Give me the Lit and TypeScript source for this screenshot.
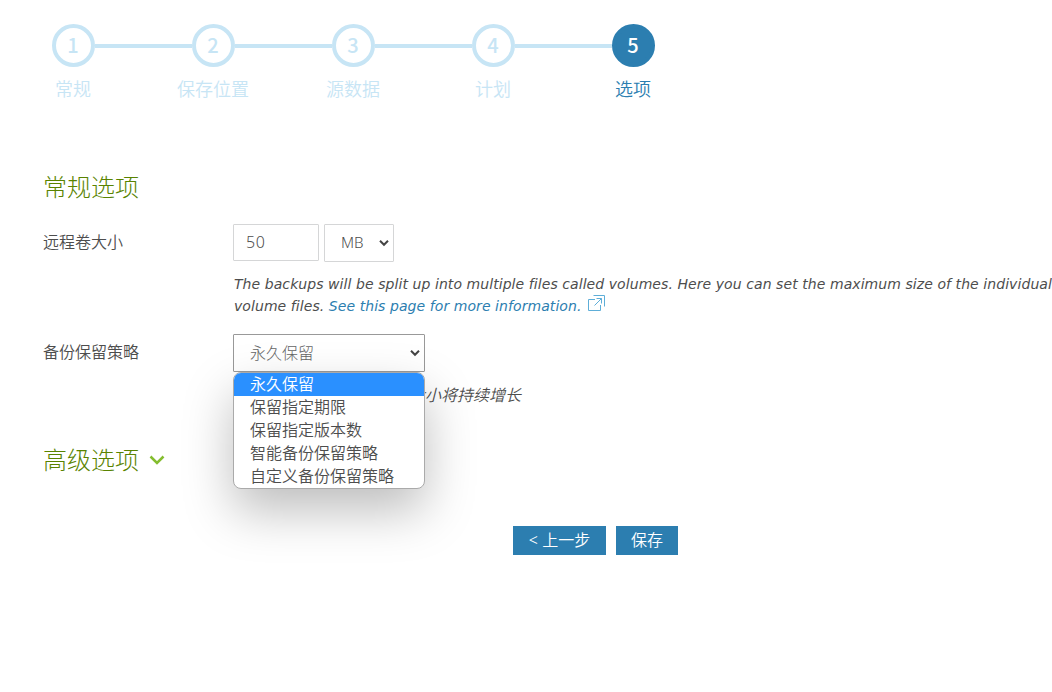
import { LitElement, html, css } from "lit";
import { customElement } from "lit/decorators.js";
import { classMap } from "lit/directives/class-map.js";

const STEPS = ["常规", "保存位置", "源数据", "计划", "选项"];
const POLICIES = ["永久保留", "保留指定期限", "保留指定版本数", "智能备份保留策略", "自定义备份保留策略"];

@customElement("app-root")
export class AppRoot extends LitElement {
  static styles = css`
    :host {
      display: block;
      position: relative;
      width: 1052px;
      height: 692px;
      overflow: hidden;
      background: #fff;
      color: #4d4d4d;
      font: 300 16px/24px "Noto Sans", "Noto Sans CJK SC DemiLight", "Noto Sans CJK SC", sans-serif;
    }
    * { box-sizing: border-box; }
    .steps { display: flex; padding: 24px 0 0 3px; height: 172px; }
    .step { width: 140px; display: flex; flex-direction: column; align-items: center; color: #c7e5f5; }
    .track { display: flex; align-items: center; width: 100%; height: 43px; }
    .line { flex: 1; height: 4px; background: #c7e5f5; }
    .line.none { background: transparent; }
    .num {
      width: 43px; height: 43px; border: 4px solid #c7e5f5; border-radius: 50%;
      display: flex; align-items: center; justify-content: center;
      font: 500 20px/33px "Noto Sans CJK SC", sans-serif;
      padding-bottom: 2px;
    }
    .name { font-size: 18px; line-height: 26px; margin-top: 9px; }
    .step.active { color: #2c7eb0; }
    .active .num { background: #2c7eb0; border-color: #2c7eb0; color: #fff; }
    .form { padding-left: 43px; }
    h2 { margin: 0; height: 30px; font: 300 24px/28px "Noto Sans CJK SC", sans-serif; color: #598300; display: flex; align-items: flex-start; }
    .row { display: flex; height: 38px; }
    .label { width: 190px; line-height: 36px; }
    .volume { margin-top: 22px; }
    .input { width: 86px; height: 37px; border: 1px solid #d5d6d7; border-radius: 1px; padding-left: 12px; line-height: 35px; letter-spacing: 0.5px; }
    .select { height: 38px; border: 1px solid #d5d6d7; border-radius: 1px; display: flex; align-items: center; justify-content: space-between; padding: 0 3px 0 16px; }
    .unit { width: 70px; margin-left: 5px; font-size: 15px; }
    .unit span { margin-top: -2px; }
    .help {
      height: 42px; margin: 12px -20px 0 191px; font: italic 400 14px/21px "DejaVu Sans", sans-serif;
      letter-spacing: 0.07px; white-space: nowrap;
    }
    .link { color: #2c7eb0; }
    .ext { margin-left: 7px; vertical-align: -1px; }
    .policy { margin-top: 18px; }
    .picker { position: relative; width: 192px; }
    .picker .select { border-color: #999; color: #666; font-family: "Noto Sans CJK SC", sans-serif; }
    .picker .select span { margin-top: -3px; }
    .menu {
      position: absolute; z-index: 2; left: 0; top: 38px; width: 192px; height: 117px;
      border: 1px solid #aaa; border-radius: 8px; overflow: hidden; background: #fff;
      box-shadow: 0 22px 50px rgba(0, 0, 0, 0.26);
    }
    .item { height: 23px; line-height: 23px; padding-left: 16px; }
    .item.on { background: #2a90ff; color: #fff; }
    .note { margin: 11px 0 0 190px; font-style: italic; line-height: 24px; }
    .advanced { margin-top: 38px; }
    .chev { margin: 10px 0 0 10px; }
    .actions { display: flex; gap: 10px; margin: 51px 0 0 470px; }
    .btn { height: 29px; line-height: 29px; background: #2c7eb0; color: #fff; text-align: center; width: 62px; }
    .btn.back { width: 93px; }
  `;

  private arrow() {
    return html`<svg width="12" height="8" viewBox="0 0 12 8" fill="none" stroke="#444" stroke-width="2"><path d="M2 1.8 6 5.8 10 1.8" /></svg>`;
  }

  render() {
    return html`
      <nav class="steps">
        ${STEPS.map((name, i) => html`
          <div class=${classMap({ step: true, active: i === 4 })}>
            <div class="track">
              <span class=${classMap({ line: true, none: i === 0 })}></span>
              <span class="num">${i + 1}</span>
              <span class=${classMap({ line: true, none: i === 4 })}></span>
            </div>
            <div class="name">${name}</div>
          </div>`)}
      </nav>
      <main class="form">
        <h2>常规选项</h2>
        <div class="row volume">
          <div class="label">远程卷大小</div>
          <div class="input">50</div>
          <div class="select unit"><span>MB</span>${this.arrow()}</div>
        </div>
        <div class="help">
          <div>The backups will be split up into multiple files called volumes. Here you can set the maximum size of the individual</div>
          <div>volume files. <span class="link">See this page for more information.<svg class="ext" width="17" height="17" viewBox="0 0 17 17" fill="none" stroke="#5eaed8"><path d="M7 4.500H.5v11h12V10M5.500 .5h11v11M6.500 10.500 13.500 3.500M8.500 3.500h5v5" /></svg></span></div>
        </div>
        <div class="row policy">
          <div class="label">备份保留策略</div>
          <div class="picker">
            <div class="select"><span>${POLICIES[0]}</span>${this.arrow()}</div>
            <div class="menu">
              ${POLICIES.map((p, i) => html`<div class=${classMap({ item: true, on: i === 0 })}>${p}</div>`)}
            </div>
          </div>
        </div>
        <div class="note">不会删除任何内容。备份大小将持续增长</div>
        <h2 class="advanced">高级选项<svg class="chev" width="16" height="10" viewBox="0 0 16 10" fill="none" stroke="#84bd2f" stroke-width="2.500"><path d="M1.500 1.500 8 8 14.500 1.500" /></svg></h2>
        <div class="actions">
          <div class="btn back">&lt; 上一步</div>
          <div class="btn">保存</div>
        </div>
      </main>
    `;
  }
}
